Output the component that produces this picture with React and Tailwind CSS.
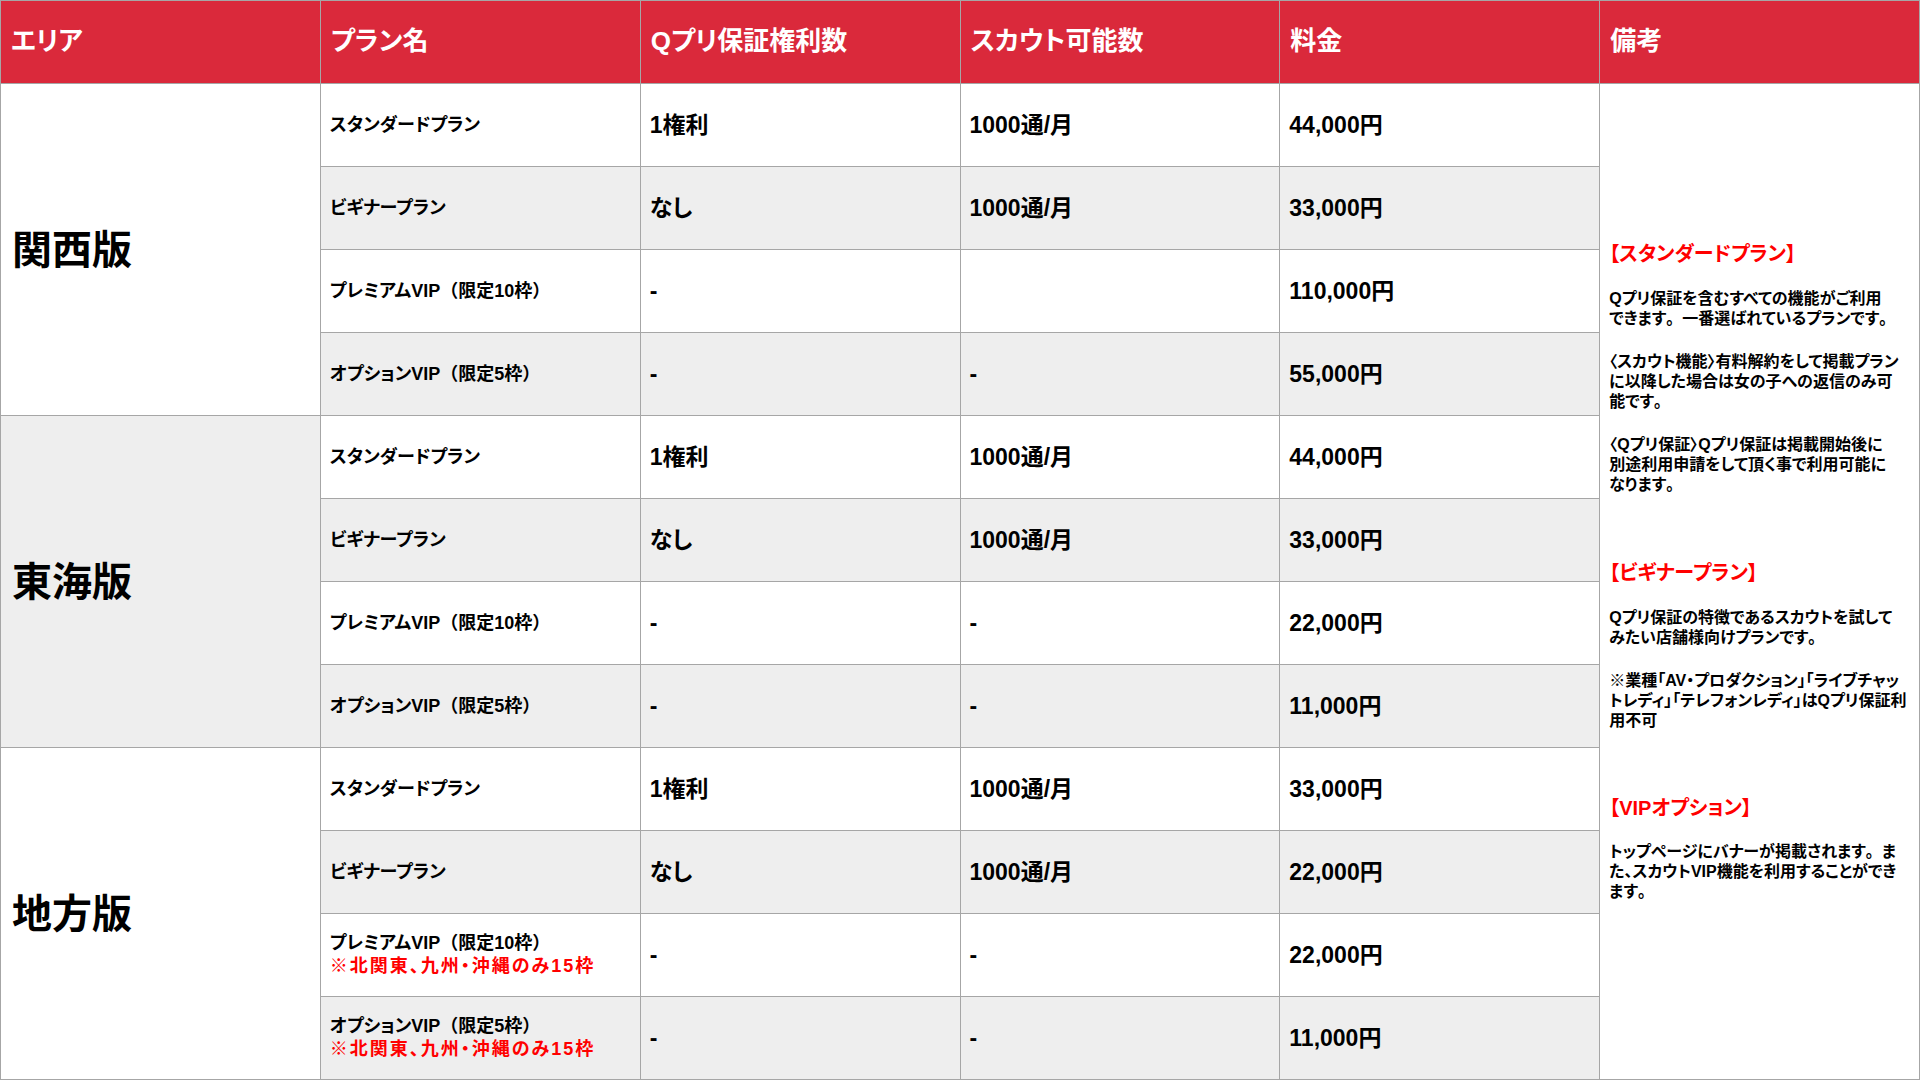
const sections = [
  {
    area: '関西版',
    bg: 'bg-white',
    rows: [
      { plan: 'スタンダードプラン', q: '1権利', scout: '1000通/月', price: '44,000円' },
      { plan: 'ビギナープラン', q: 'なし', scout: '1000通/月', price: '33,000円' },
      { plan: 'プレミアムVIP', limit: '限定10枠', q: '-', scout: '', price: '110,000円' },
      { plan: 'オプションVIP', limit: '限定5枠', q: '-', scout: '-', price: '55,000円' },
    ],
  },
  {
    area: '東海版',
    bg: 'bg-[#eeeeee]',
    rows: [
      { plan: 'スタンダードプラン', q: '1権利', scout: '1000通/月', price: '44,000円' },
      { plan: 'ビギナープラン', q: 'なし', scout: '1000通/月', price: '33,000円' },
      { plan: 'プレミアムVIP', limit: '限定10枠', q: '-', scout: '-', price: '22,000円' },
      { plan: 'オプションVIP', limit: '限定5枠', q: '-', scout: '-', price: '11,000円' },
    ],
  },
  {
    area: '地方版',
    bg: 'bg-white',
    rows: [
      { plan: 'スタンダードプラン', q: '1権利', scout: '1000通/月', price: '33,000円' },
      { plan: 'ビギナープラン', q: 'なし', scout: '1000通/月', price: '22,000円' },
      { plan: 'プレミアムVIP', limit: '限定10枠', note: '※北関東、九州・沖縄のみ15枠', q: '-', scout: '-', price: '22,000円' },
      { plan: 'オプションVIP', limit: '限定5枠', note: '※北関東、九州・沖縄のみ15枠', q: '-', scout: '-', price: '11,000円' },
    ],
  },
];

const headers = ['エリア', 'プラン名', 'Qプリ保証権利数', 'スカウト可能数', '料金', '備考'];

const cell = 'border-r border-b border-[#a6a6a6] flex items-center';
const full = '[font-feature-settings:normal]';

const Notes = () => (
  <div className="row-span-12 border-r border-b border-[#a6a6a6] bg-white pl-[9px] pt-[158px] text-[16px] leading-[20px] whitespace-nowrap">
    <p className="text-[20px] leading-[24px] text-[#ff0000]">【スタンダードプラン】</p>
    <p className="mt-[23px]">Qプリ保証を含むすべての機能がご利用<br />できます<span className={full}>。</span>一番選ばれているプランです<span className={full}>。</span></p>
    <p className="mt-[23px]">〈スカウト機能〉有料解約をして掲載プラン<br />に以降した場合は女の子への返信のみ可<br />能です<span className={full}>。</span></p>
    <p className="mt-[23px]">〈Qプリ保証〉Qプリ保証は掲載開始後に<br />別途利用申請をして頂く事で利用可能に<br />なります<span className={full}>。</span></p>
    <p className="mt-[66px] text-[20px] leading-[24px] text-[#ff0000]">【ビギナープラン】</p>
    <p className="mt-[23px]">Qプリ保証の特徴であるスカウトを試して<br />みたい店舗様向けプランです<span className={full}>。</span></p>
    <p className="mt-[23px]">※業種「AV・プロダクション」「ライブチャッ<br />トレディ」「テレフォンレディ」はQプリ保証利<br />用不可</p>
    <p className="mt-[65px] text-[20px] leading-[24px] text-[#ff0000]">【VIPオプション】</p>
    <p className="mt-[22px]">トップページにバナーが掲載されます<span className={full}>。</span>ま<br />た、スカウトVIP機能を利用することができ<br />ます<span className={full}>。</span></p>
  </div>
);

export default function App() {
  return (
    <div className="w-[1920px] h-[1080px] overflow-hidden bg-white font-['Liberation_Sans','Noto_Sans_CJK_JP',sans-serif] font-bold text-black [font-feature-settings:'palt']">
      <div className="grid grid-cols-6 grid-rows-[83px_repeat(12,83px)] border-l border-t border-[#a6a6a6]">
        {headers.map((h) => (
          <div key={h} className={`${cell} bg-[#da293b] text-white text-[26px] pl-[10px] pb-[2px]`}>
            {h}
          </div>
        ))}
        {sections.map((s, si) =>
          s.rows.map((r, ri) => {
            const rowBg = ri % 2 === 0 ? 'bg-white' : 'bg-[#eeeeee]';
            return [
              ri === 0 && (
                <div key={`a${si}`} className={`${cell} row-span-4 ${s.bg} pl-[11px] text-[40px]`}>
                  {s.area}
                </div>
              ),
              <div key={`p${si}${ri}`} className={`${cell} ${rowBg} pl-[9px] text-[18px] leading-[23px]`}>
                <div>
                  <div>
                    {r.plan}
                    {r.limit && <span className={full}>（{r.limit}）</span>}
                  </div>
                  {r.note && <div className="text-[#ff0000] tracking-[2px]">{r.note}</div>}
                </div>
              </div>,
              <div key={`q${si}${ri}`} className={`${cell} ${rowBg} pl-[9px] text-[23px]`}>{r.q}</div>,
              <div key={`s${si}${ri}`} className={`${cell} ${rowBg} pl-[9px] text-[23px]`}>{r.scout}</div>,
              <div key={`m${si}${ri}`} className={`${cell} ${rowBg} pl-[9px] text-[23px]`}>{r.price}</div>,
              si === 0 && ri === 0 && <Notes key="notes" />,
            ];
          })
        )}
      </div>
    </div>
  );
}
